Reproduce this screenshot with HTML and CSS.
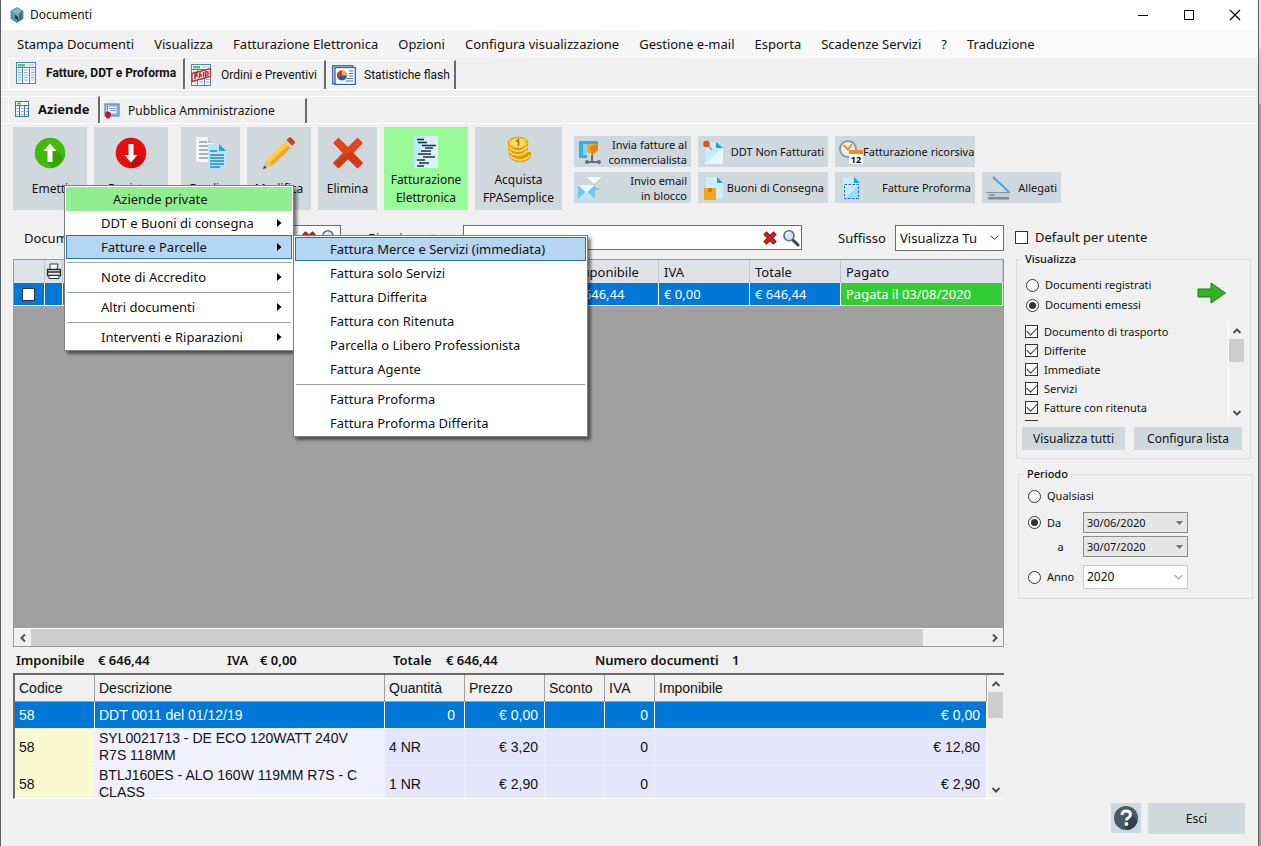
FILE: index.html
```html
<!DOCTYPE html>
<html lang="it">
<head>
<meta charset="utf-8">
<meta name="viewport" content="width=device-width, initial-scale=1">
<title>Documenti</title>
<link rel="stylesheet" href="styles.css">
</head>
<body>
<svg class="defs" aria-hidden="true">
  <defs>
    <symbol id="chev-up" viewBox="0 0 10 10"><path d="M1.500 7L5 3.500 8.500 7" fill="none" stroke="#505050" stroke-width="2"/></symbol>
    <symbol id="chev-down" viewBox="0 0 10 10"><path d="M1.500 3L5 6.500 8.500 3" fill="none" stroke="#505050" stroke-width="2"/></symbol>
    <symbol id="chev-left" viewBox="0 0 10 10"><path d="M7 1.500L3.500 5 7 8.500" fill="none" stroke="#505050" stroke-width="2"/></symbol>
    <symbol id="chev-right" viewBox="0 0 10 10"><path d="M3 1.500L6.500 5 3 8.500" fill="none" stroke="#505050" stroke-width="2"/></symbol>
    <symbol id="sub-arrow" viewBox="0 0 5 8"><path d="M0 0L4.500 4 0 8Z" fill="#000"/></symbol>
    <symbol id="sheet" viewBox="0 0 20 22">
      <rect x=".5" y=".5" width="19" height="21" fill="#f4f9fd" stroke="#4f86b8"/>
      <rect x="2" y="2" width="7" height="2.500" fill="#58c468"/><path d="M11 3h7" stroke="#9fc0dc"/>
      <path d="M1 5.500h18M6.500 5.500v16M13.500 5.500v16" stroke="#4f86b8"/>
      <path d="M2 8h3.500M2 10.500h3.500M2 13h3.500M2 15.500h3.500M2 18h3.500M8 8h4M8 10.500h4M8 13h4M8 15.500h4M8 18h4M15 8h3.500M15 10.500h3.500M15 13h3.500M15 15.500h3.500M15 18h3.500" stroke="#8fb2d0"/>
    </symbol>
    <symbol id="clear" viewBox="0 0 14 14"><path d="M3.500 3.500l7 7M10.500 3.500l-7 7" stroke="#8d1010" stroke-width="4.600" stroke-linecap="square"/><path d="M3.500 3.500l7 7M10.500 3.500l-7 7" stroke="#d02020" stroke-width="3" stroke-linecap="square"/></symbol>
    <symbol id="search" viewBox="0 0 18 18"><path d="M10.500 10.500l5.500 5.500" stroke="#3c4048" stroke-width="3" stroke-linecap="round"/><circle cx="7" cy="6.700" r="5" fill="#cfe4f7" stroke="#5d6d7e" stroke-width="1.600"/><path d="M4 6.200q.6-2.600 3-2.700" fill="none" stroke="#fff" stroke-width="1.400"/></symbol>
  </defs>
</svg>

<div class="window">
  <header class="titlebar">
    <svg class="app-icon" viewBox="0 0 14 16"><path d="M7 0l6.500 3.700v8.200L7 16 .5 11.900V3.700z" fill="#5b93b4"/><path d="M7 1l5.300 3L7 7 1.700 4z" fill="#78b5cf"/><path d="M7 7l5.300-3v7.500L7 15z" fill="#2a6c9a"/><path d="M3 6l4-2 4 2-2 1v4.500L7 12V8z" fill="#8fb670"/><path d="M5 8l3 1.500V13L5 11.400z" fill="#163f63"/></svg>
    <h1 class="title">Documenti</h1>
    <div class="win-controls">
      <button class="win-btn" aria-label="Riduci a icona"><svg width="12" height="12" viewBox="0 0 12 12"><path d="M1 6.500h10" stroke="#000"/></svg></button>
      <button class="win-btn" aria-label="Ingrandisci"><svg width="12" height="12" viewBox="0 0 12 12"><rect x="1.500" y="1.500" width="9" height="9" fill="none" stroke="#000"/></svg></button>
      <button class="win-btn" aria-label="Chiudi"><svg width="12" height="12" viewBox="0 0 12 12"><path d="M1 1l10 10M11 1L1 11" stroke="#000" stroke-width="1.200"/></svg></button>
    </div>
  </header>

  <nav class="menubar" aria-label="Menu principale">
    <a href="#">Stampa Documenti</a><a href="#">Visualizza</a><a href="#">Fatturazione Elettronica</a><a href="#">Opzioni</a><a href="#">Configura visualizzazione</a><a href="#">Gestione e-mail</a><a href="#">Esporta</a><a href="#">Scadenze Servizi</a><a href="#">?</a><a href="#">Traduzione</a>
  </nav>

  <div class="tabs tabs-main">
    <button class="tab tab-main-1 active"><svg width="20" height="22"><use href="#sheet"/></svg>Fatture, DDT e Proforma</button>
    <button class="tab tab-main-2"><svg width="21" height="22" viewBox="0 0 21 22"><use href="#sheet" width="20" height="22"/><path d="M1 9.500L19.500 4.500v8L1 17.500z" fill="#f6dede" stroke="#b03038" stroke-width="1.300"/><path d="M4 15v-5l2-.5v2.500l-2 .6M8 14l1-5 1.500 4M12.500 8v5M14.500 7.500v4.600l2.500-1.500V8z" fill="none" stroke="#b03038" stroke-width="1.400"/></svg>Ordini e Preventivi</button>
    <button class="tab tab-main-3"><svg width="24" height="20" viewBox="0 0 24 20"><rect x=".7" y=".7" width="20" height="18" fill="#dce8f6" stroke="#31589a" stroke-width="1.200"/><rect x="3" y="2.500" width="20.300" height="17" fill="#f3f8fe" stroke="#31589a" stroke-width="1.200"/><circle cx="10" cy="10.500" r="5" fill="#2856b0"/><path d="M10 10.500V5.500a5 5 0 0 0-4.600 7z" fill="#d8302a"/><path d="M10 10.500V5.500a5 5 0 0 1 5 5z" fill="#f6b92c"/><path d="M17 6h4M17 8.500h4M17 11h4M15 13.500h6M14 16h7" stroke="#4c78b8"/></svg>Statistiche flash</button>
  </div>
  <div class="tabs tabs-sub">
    <button class="tab tab-sub-1 active"><svg width="14" height="16" viewBox="0 0 14 16"><rect x=".5" y=".5" width="13" height="15" fill="#f4f9fd" stroke="#3f76aa"/><path d="M2 2.500h4" stroke="#58c468" stroke-width="2"/><path d="M1 4.500h12M4.500 4.500v11M9.500 4.500v11" stroke="#3f76aa"/><path d="M1.500 7.500h2M1.500 10.500h2M1.500 13.500h2M6 7.500h2.500M6 10.500h2.500M6 13.500h2.500M11 7.500h2M11 10.500h2M11 13.500h2" stroke="#7fa6c8"/></svg>Aziende</button>
    <button class="tab tab-sub-2"><svg width="16" height="16" viewBox="0 0 16 16"><rect x="1" y="1" width="14" height="12" fill="#a9cdf0" stroke="#3f74b4"/><rect x="3.500" y="3" width="9.500" height="8" fill="#eef6fd" stroke="#6e9dcc"/><path d="M5 5.500h6.500M6 7.500h5.500" stroke="#6e9dcc"/><circle cx="4" cy="11.500" r="3" fill="#c01820"/><path d="M2.500 13.500V16L4 15l1.500 1v-2.500z" fill="#8f1016"/></svg>Pubblica Amministrazione</button>
  </div>

  <div class="content">
    <div class="toolbar">
      <div class="big-group">
        <button class="big w74"><svg viewBox="0 0 32 32"><circle cx="16" cy="16" r="15.300" fill="#45b80a"/><path d="M16 7l13 13A15 15 0 0 1 19 31l-6-6z" fill="#2f8f06" opacity=".55"/><path d="M16 6.500l6.500 7.500h-4v11h-5V14h-4z" fill="#fff"/></svg><span>Emetti</span></button>
        <button class="big w74"><svg viewBox="0 0 32 32"><circle cx="16" cy="16" r="15.300" fill="#e60d0d"/><path d="M22 17l7.500 6A15 15 0 0 1 16 31.300V25z" fill="#a80707" opacity=".55"/><path d="M16 25.500L9.500 18h4V7h5v11h4z" fill="#fff"/></svg><span>Registra</span></button>
      </div>
      <div class="big-group big-group-last">
        <button class="big w59"><svg viewBox="0 0 32 32"><path d="M1 0h12l6 6v19H1z" fill="#f5f5f5"/><path d="M13 0l6 6h-6z" fill="#c3c8cc"/><path d="M4 5h8M4 9h12M4 13h12M4 17h12M4 21h12" stroke="#909ca4" stroke-width="1.400"/><path d="M13 7h11l7 7v18H13z" fill="#b9e6fd"/><path d="M24 7l7 7h-7z" fill="#2aa0e2"/><path d="M15 14h7M15 18h14M15 21h14M15 24h14M15 27h14M15 30h10" stroke="#1f86cc" stroke-width="1.400"/></svg><span>Duplica</span></button>
        <button class="big w64"><svg viewBox="0 0 32 32"><path d="M0 32l3.500-9L22 4.500l6 6L9.500 28.500z" fill="#fdd23c"/><path d="M6.500 26L25.500 7.500l2.500 3L9.500 28.500z" fill="#f5a623"/><path d="M3.500 23l6 5.500L0 32z" fill="#efc08c"/><path d="M1.200 28.500l2.500 2.400L0 32z" fill="#37474f"/><path d="M21.500 5l3-3 6 6-3 3z" fill="#c9d2d8"/><path d="M23.500 3l2-2q1.500-1.300 3 0l3 3q1 1.500 0 2.500l-2.200 2.200z" fill="#c8401c"/></svg><span>Modifica</span></button>
        <button class="big w59"><svg viewBox="0 0 32 32"><path d="M1 6l5.500-5.500L16 10 25.500.5 31 6l-9.500 10L31 26l-5.500 5.500L16 22l-9.500 9.500L1 26l9.500-10z" fill="#e2451c"/><path d="M16 16l5.500 0L31 26l-5.500 5.500L16 22l-9.500 9.500L1 26z" fill="#c23512" opacity=".6"/></svg><span>Elimina</span></button>
        <button class="big tall green w84"><svg viewBox="0 0 32 32"><path d="M4 0h24v32H4z" fill="#bfe7fb"/><path d="M16 0h12v32H4z" fill="#d9f2fd"/><path d="M7 3.500h7M8 6.500h9M12 9.500h14M15 12h8M11 15h10M8 18h13M13 21h12M7 24h8M9 27h10M7 30h7" stroke="#17303f" stroke-width="1.300"/></svg><span>Fatturazione<br>Elettronica</span></button>
        <button class="big tall w87"><svg viewBox="0 0 32 32"><g fill="#e29a0c"><path d="M6 16h22v4.500Q25 26 17 26T6 20z"/><path d="M5 6h20v10Q22 21 15 21T5 16z"/></g><g fill="none" stroke="#ffe068" stroke-width="1.700"><path d="M5.500 10.500Q9 15 15 15t9.500-4.500M5.500 14.500Q9 19 15 19t9.500-4.500M7 19.500q4 4.500 10 4.500t10-4.500"/></g><ellipse cx="15" cy="7" rx="10" ry="5.800" fill="#fbc62c" stroke="#e29a0c"/><ellipse cx="15" cy="7" rx="7" ry="3.800" fill="#ffdf70"/><path d="M13 5.500l2.500-1.500v6" fill="none" stroke="#b87506" stroke-width="1.700"/></svg><span>Acquista<br>FPASemplice</span></button>
      </div>
      <div class="small-grid">
        <button class="small w117"><svg viewBox="0 0 24 24"><path d="M1 1h19v3H5v11h4v3H1z" fill="#2bb0f0"/><path d="M5 4h4v11H5z" fill="#8ed6f8"/><path d="M9 4h11v6l-5 5-6-3z" fill="#f9a01c"/><path d="M14 15L20 10V4l-8 3z" fill="#ef7d0c"/><path d="M14 15v7M9 22h12" stroke="#5d6f7a" stroke-width="2"/><circle cx="9" cy="22" r="2" fill="#5d6f7a"/><circle cx="21" cy="22" r="2" fill="#5d6f7a"/></svg><span>Invia fatture al<br>commercialista</span></button>
        <button class="small w130"><svg viewBox="0 0 24 24"><path d="M3 2h11l7 6v16H3z" fill="#c9ecfd"/><path d="M3 24L21 8v16z" fill="#eaf8fe"/><path d="M14 2l7 6h-7z" fill="#1e9fe0"/><path d="M6 5l4 5" stroke="#8d9aa2" stroke-width="1.300"/><circle cx="4.500" cy="4" r="3.300" fill="#e0501c"/></svg><span>DDT Non Fatturati</span></button>
        <button class="small tight w140"><svg viewBox="0 0 24 24"><circle cx="9" cy="9" r="8" fill="#eceff1" stroke="#8a9aa3" stroke-width="2"/><path d="M4.500 5L9 9.500 13 4" fill="none" stroke="#f38a1c" stroke-width="1.800"/><path d="M10 11h14v13H10z" fill="#fff"/><path d="M10 10h14v4H10z" fill="#f38a1c"/><text x="17" y="23" class="cal-num">12</text></svg><span>Fatturazione ricorsiva</span></button>
        <i class="blank"></i>
        <button class="small w117"><svg viewBox="0 0 24 24"><path d="M8 1h16l-8 8z" fill="#fafafa"/><path d="M8 1l8 7 8-7-2 3-6 6-6-6z" fill="#c8ced2"/><path d="M15 10l9 4H14z" fill="#b1b9be"/><path d="M0 9h17v14H0z" fill="#6cc6f4"/><path d="M0 23l8.500-8 8.500 8z" fill="#bfe8fc"/><path d="M0 9l8.500 8L17 9z" fill="#e6f7fe"/></svg><span>Invio email<br>in blocco</span></button>
        <button class="small w130"><svg viewBox="0 0 24 24"><path d="M4 1h11l6 6v16H4z" fill="#cdeefd"/><path d="M15 1l6 6h-6z" fill="#1e9fe0"/><path d="M2 12h12v12H2z" fill="#fba21e"/><path d="M6 12h4v4H6z" fill="#e27409"/></svg><span>Buoni di Consegna</span></button>
        <button class="small w140"><svg viewBox="0 0 24 24"><path d="M4 1h11l6 6v17H4z" fill="#c9ecfd"/><path d="M4 24L21 8v16z" fill="#9fdcf9"/><path d="M15 1l6 6h-6z" fill="#1e9fe0"/><rect x="5.500" y="8.500" width="14" height="14" fill="none" stroke="#1c6fa4" stroke-dasharray="2.500 1.500"/></svg><span>Fatture Proforma</span></button>
        <button class="small w79"><svg viewBox="0 0 24 24"><path d="M7 1l16 15" stroke="#42a5e0" stroke-width="2"/><path d="M0 16h24l-1 5H2z" fill="#c4ced4"/><path d="M2 21h21v2.500H2z" fill="#78909c"/><path d="M0 16.500h24" stroke="#84959e"/><path d="M3 19h6" stroke="#5c7480"/></svg><span>Allegati</span></button>
      </div>
    </div>

    <div class="body-cols">
      <main class="left-col">
        <div class="filters">
          <label class="f-doc" for="doc">Documento</label>
          <div class="search-box box-doc"><input id="doc" type="text"><button aria-label="Cancella documento"><svg width="14" height="14"><use href="#clear"/></svg></button><button aria-label="Cerca documento"><svg width="18" height="18"><use href="#search"/></svg></button></div>
          <label class="f-ric" for="ric">Ricevimento</label>
          <div class="search-box box-ric"><input id="ric" type="text"><button aria-label="Cancella"><svg width="14" height="14"><use href="#clear"/></svg></button><button aria-label="Cerca"><svg width="18" height="18"><use href="#search"/></svg></button></div>
          <label class="f-suf" for="suf">Suffisso</label>
          <div class="select-wrap suf-wrap"><select id="suf"><option>Visualizza Tu</option></select><svg width="9" height="6" viewBox="0 0 9 6"><path d="M.5 .5l4 4 4-4" fill="none" stroke="#404040"/></svg></div>
        </div>

        <div class="doc-grid">
          <table class="doc-table">
            <colgroup><col class="c31"><col class="c18"><col><col class="c91"><col class="c91"><col class="c91"><col class="c162"></colgroup>
            <thead><tr><th></th><th class="print-cell"><svg width="16" height="17" viewBox="0 0 16 17"><path d="M4 6V1h8l-1 5" fill="#fff" stroke="#2a3c50"/><path d="M1.500 6.500h13v6h-13z" fill="#e8edf2" stroke="#222c36" stroke-width="1.300"/><path d="M2 9h12" stroke="#222c36" stroke-width="1.500"/><path d="M3 12.500h10v3H3z" fill="#fff" stroke="#222c36"/></svg></th><th></th><th>Imponibile</th><th>IVA</th><th>Totale</th><th>Pagato</th></tr></thead>
            <tbody><tr><td class="tick-cell"><input class="check" type="checkbox" aria-label="Seleziona riga"></td><td></td><td></td><td>€ 646,44</td><td>€ 0,00</td><td>€ 646,44</td><td class="paid">Pagata il 03/08/2020</td></tr></tbody>
          </table>
          <div class="hscroll"><button aria-label="Scorri a sinistra"><svg width="10" height="10"><use href="#chev-left"/></svg></button><div class="hthumb"></div><button class="end" aria-label="Scorri a destra"><svg width="10" height="10"><use href="#chev-right"/></svg></button></div>
        </div>

        <dl class="totals">
          <div class="t1"><dt>Imponibile</dt><dd>€ 646,44</dd></div>
          <div class="t2"><dt>IVA</dt><dd>€ 0,00</dd></div>
          <div class="t3"><dt>Totale</dt><dd>€ 646,44</dd></div>
          <div class="t4"><dt>Numero documenti</dt><dd>1</dd></div>
        </dl>

        <div class="lines">
          <div class="lines-clip">
            <table class="line-table">
              <colgroup><col class="c80"><col class="c290"><col class="c80"><col class="c80"><col class="c60"><col class="c50"><col></colgroup>
              <thead><tr><th>Codice</th><th>Descrizione</th><th>Quantità</th><th>Prezzo</th><th>Sconto</th><th>IVA</th><th>Imponibile</th></tr></thead>
              <tbody>
                <tr class="sel"><td>58</td><td>DDT 0011 del 01/12/19</td><td class="qty-zero">0</td><td class="num">€ 0,00</td><td></td><td class="num">0</td><td class="num">€ 0,00</td></tr>
                <tr><td>58</td><td>SYL0021713 - DE ECO 120WATT 240V R7S 118MM</td><td>4 NR</td><td class="num">€ 3,20</td><td></td><td class="num">0</td><td class="num">€ 12,80</td></tr>
                <tr><td>58</td><td>BTLJ160ES - ALO 160W 119MM R7S - C CLASS</td><td>1 NR</td><td class="num">€ 2,90</td><td></td><td class="num">0</td><td class="num">€ 2,90</td></tr>
              </tbody>
            </table>
          </div>
          <div class="vscroll"><button aria-label="Scorri su"><svg width="10" height="10"><use href="#chev-up"/></svg></button><div class="vthumb"></div><button class="end" aria-label="Scorri giù"><svg width="10" height="10"><use href="#chev-down"/></svg></button></div>
        </div>
      </main>

      <aside class="right-col">
        <label class="default-user"><input class="check" type="checkbox">Default per utente</label>

        <fieldset class="group g-view">
          <legend>Visualizza</legend>
          <div class="view-top">
            <div class="radios">
              <label><input class="radio" type="radio" name="view">Documenti registrati</label>
              <label><input class="radio" type="radio" name="view" checked>Documenti emessi</label>
            </div>
            <button class="go" aria-label="Applica"><svg width="30" height="22" viewBox="0 0 30 22"><path d="M1 7h13V1l14.500 10L14 21v-6H1z" fill="#33b422" stroke="#1c7a12"/></svg></button>
          </div>
          <div class="list">
            <div class="list-items">
              <label><input class="check" type="checkbox" checked>Documento di trasporto</label>
              <label><input class="check" type="checkbox" checked>Differite</label>
              <label><input class="check" type="checkbox" checked>Immediate</label>
              <label><input class="check" type="checkbox" checked>Servizi</label>
              <label><input class="check" type="checkbox" checked>Fatture con ritenuta</label>
              <label><input class="check" type="checkbox" checked aria-label="Altro"></label>
            </div>
            <div class="vscroll"><button aria-label="Scorri su"><svg width="10" height="10"><use href="#chev-up"/></svg></button><div class="vthumb"></div><button class="end" aria-label="Scorri giù"><svg width="10" height="10"><use href="#chev-down"/></svg></button></div>
          </div>
          <div class="view-actions"><button>Visualizza tutti</button><button>Configura lista</button></div>
        </fieldset>

        <fieldset class="group g-period">
          <legend>Periodo</legend>
          <div class="period">
            <label class="wide"><input class="radio" type="radio" name="per">Qualsiasi</label>
            <label><input class="radio" type="radio" name="per" checked>Da</label>
            <div class="select-wrap date"><select aria-label="Da"><option>30/06/2020</option></select><svg width="7" height="4" viewBox="0 0 7 4"><path d="M0 0h7L3.500 4z" fill="#707070"/></svg></div>
            <label class="to" for="to">a</label>
            <div class="select-wrap date"><select id="to"><option>30/07/2020</option></select><svg width="7" height="4" viewBox="0 0 7 4"><path d="M0 0h7L3.500 4z" fill="#707070"/></svg></div>
            <label class="anno"><input class="radio" type="radio" name="per">Anno</label>
            <div class="select-wrap year"><select aria-label="Anno"><option>2020</option></select><svg width="9" height="6" viewBox="0 0 9 6"><path d="M.5 1l4 4 4-4" fill="none" stroke="#b0b0b0" stroke-width="1.300"/></svg></div>
          </div>
        </fieldset>
      </aside>
    </div>

    <footer class="footer">
      <button class="help" aria-label="Aiuto"><svg width="26" height="26" viewBox="0 0 26 26"><circle cx="13" cy="13" r="12" fill="#455a64"/><path d="M16 6l8.500 10A12 12 0 0 1 14 25l-3-4z" fill="#2f424b"/><path d="M9 10q0-4 4.200-4t4.200 3.500q0 2-2 3.300-1.900 1.200-1.900 2.700" fill="none" stroke="#fff" stroke-width="3"/><circle cx="13.400" cy="19" r="1.900" fill="#fff"/></svg></button>
      <button class="exit">Esci</button>
    </footer>
  </div>

  <ul class="popup popup-main">
    <li><button class="head">Aziende private</button></li>
    <li><button>DDT e Buoni di consegna<svg width="5" height="8"><use href="#sub-arrow"/></svg></button></li>
    <li><button class="hot">Fatture e Parcelle<svg width="5" height="8"><use href="#sub-arrow"/></svg></button></li>
    <li class="sep"></li>
    <li><button>Note di Accredito<svg width="5" height="8"><use href="#sub-arrow"/></svg></button></li>
    <li class="sep"></li>
    <li><button>Altri documenti<svg width="5" height="8"><use href="#sub-arrow"/></svg></button></li>
    <li class="sep"></li>
    <li><button>Interventi e Riparazioni<svg width="5" height="8"><use href="#sub-arrow"/></svg></button></li>
  </ul>
  <ul class="popup popup-sub">
    <li><button class="hot">Fattura Merce e Servizi (immediata)</button></li>
    <li><button>Fattura solo Servizi</button></li>
    <li><button>Fattura Differita</button></li>
    <li><button>Fattura con Ritenuta</button></li>
    <li><button>Parcella o Libero Professionista</button></li>
    <li><button>Fattura Agente</button></li>
    <li class="sep"></li>
    <li><button>Fattura Proforma</button></li>
    <li><button>Fattura Proforma Differita</button></li>
  </ul>
</div>
</body>
</html>
```
FILE: styles.css
```css
* { box-sizing: border-box; }

body {
  margin: 0;
  padding-right: 2px;
  background: linear-gradient(#e4e4e4 0 49px, #c8cccc 49px 104px, #9c9c9c 104px);
  color: #111;
  font: 13px/18px "Noto Sans", "Open Sans", sans-serif;
}

button, input, select { font: inherit; color: inherit; margin: 0; }
button { border: 0; padding: 0; background: none; white-space: nowrap; }
label, a { white-space: nowrap; }
svg { display: block; flex: none; }
.defs { position: absolute; width: 0; height: 0; }

.window {
  position: relative;
  display: flex;
  flex-direction: column;
  min-height: 100vh;
  border-left: 1px solid #5c5c5c;
  border-right: 1px solid #5c5c5c;
  background: #f0f0f0;
}

/* Title bar */
.titlebar { display: flex; align-items: center; height: 30px; padding-left: 9px; background: #fff; }
.app-icon { width: 14px; height: 16px; }
.title { margin: 0 0 0 6px; font-size: 12px; font-weight: 400; }
.win-controls { display: flex; margin-left: auto; }
.win-btn { display: flex; align-items: center; justify-content: center; width: 46px; height: 28px; }

.menubar {
  display: flex;
  gap: 20px;
  height: 28px;
  padding-left: 16px;
  background: linear-gradient(90deg, #f0f0f0, #fafafa 80%);
  line-height: 28px;
}
.menubar a { color: #111; text-decoration: none; }

/* Tab strips */
.tabs { display: flex; align-items: flex-end; margin: 0 2px 0 0; padding-left: 7px; border-bottom: 1px solid #fff; }
.tabs-main { height: 32px; font: 12px/18px Roboto, sans-serif; }
.tabs-sub { height: 28px; margin-top: 6px; border-top: 1px solid #fff; }
.tab {
  display: flex;
  align-items: center;
  height: 29px;
  border-top: 1px solid #fff;
  border-left: 1px solid #fff;
  border-right: 2px solid #6a6a6a;
}
.tab.active { height: 31px; padding-bottom: 3px; font-weight: 700; }
.tabs-sub .tab { height: 25px; }
.tabs-sub .tab.active { height: 27px; }
.tab-main-1 { width: 177px; padding-left: 7px; gap: 10px; }
.tab-main-2 { width: 141px; padding-left: 5px; gap: 9px; }
.tab-main-3 { width: 130px; padding-left: 5px; gap: 8px; }
.tab-sub-1 { width: 92px; padding-left: 6px; gap: 9px; }
.tab-sub-2 { width: 207px; padding-left: 3px; gap: 8px; font-size: 12px; }

/* Toolbar */
.content { display: flex; flex: 1; flex-direction: column; padding: 3px 5px 12px 12px; }
.toolbar { display: flex; }
.big-group { display: flex; gap: 7px; margin-right: 13px; }
.big-group-last { margin-right: 12px; }
.big {
  display: flex;
  flex-direction: column;
  align-items: center;
  justify-content: space-between;
  height: 83px;
  padding: 10px 0 12px;
  background: #cfd8dd;
  font-size: 12px;
}
.big svg { width: 32px; height: 32px; }
.big.tall { padding: 9px 0 3px; }
.big.green { background: #98fb98; }
.w59 { width: 59px; }
.w64 { width: 64px; }
.w74 { width: 74px; }
.w79 { width: 79px; }
.w84 { width: 84px; }
.w87 { width: 87px; }
.w117 { width: 117px; }
.w130 { width: 130px; }
.w140 { width: 140px; }
.small-grid { display: grid; grid-template-columns: repeat(4, auto); align-content: center; gap: 5px 7px; padding-top: 2px; }
.small {
  display: flex;
  align-items: center;
  justify-content: space-between;
  height: 31px;
  padding: 0 4px;
  background: #cfd8dd;
  font-size: 11px;
  line-height: 15px;
  text-align: right;
}
.small.tight { padding-right: 1px; }
.small svg { width: 24px; height: 24px; }
.cal-num { font: 700 9px "Noto Sans", sans-serif; text-anchor: middle; }

/* Columns */
.body-cols { display: flex; flex: 1; gap: 11px; padding-top: 14px; }
.left-col { display: flex; flex: 1; flex-direction: column; min-width: 0; }
.right-col { width: 238px; flex: none; }

.filters { display: flex; align-items: center; height: 27px; }
.f-doc { width: 85px; padding-left: 11px; }
.box-doc { width: 243px; }
.f-ric { width: 122px; padding-left: 27px; }
.box-ric { flex: 1; }
.f-suf { width: 93px; padding-left: 36px; }
.search-box { display: flex; align-items: center; height: 25px; padding-right: 1px; border: 1px solid #6e6e6e; background: #fff; }
.search-box input { flex: 1; min-width: 0; border: 0; outline: 0; background: none; }
.search-box button { margin-left: 5px; }

.select-wrap { position: relative; background: #fff; border: 1px solid #6e6e6e; }
.select-wrap select { display: block; width: 100%; height: 100%; padding: 0 4px; border: 0; background: none; appearance: none; }
.select-wrap svg { position: absolute; top: 50%; right: 4px; translate: 0 -50%; pointer-events: none; }
.suf-wrap { width: 109px; height: 26px; }

/* Document grid */
.doc-grid { display: flex; flex: 1; flex-direction: column; margin-top: 8px; border: 1px solid #999; background: #a0a0a0; }
table { width: 100%; border-collapse: separate; border-spacing: 0; table-layout: fixed; }
th { font-weight: 400; text-align: left; }
th, td { padding: 0 5px; overflow: hidden; }
.c18 { width: 18px; }
.c31 { width: 31px; }
.c50 { width: 50px; }
.c60 { width: 60px; }
.c80 { width: 80px; }
.c91 { width: 91px; }
.c162 { width: 162px; }
.c290 { width: 290px; }
.doc-table th { height: 23px; border-right: 1px solid #bfc3c7; background: #dfe2e8; white-space: nowrap; }
.doc-table td { height: 23px; border-right: 1px solid #fff; border-bottom: 1px solid #fff; background: #0078d7; color: #fff; white-space: nowrap; }
.doc-table .paid { background: #32cd32; }
.doc-table .print-cell { padding: 0 1px; }
.tick-cell { padding-left: 8px; }

.check, .radio { display: block; flex: none; width: 13px; height: 13px; appearance: none; border: 1px solid #333; background: #fff; }
.check:checked::after {
  content: "";
  display: block;
  width: 9px;
  height: 5px;
  margin: 1px;
  border: solid #333;
  border-width: 0 0 1px 1px;
  rotate: -45deg;
}
.radio { border-radius: 50%; }
.radio:checked::after { content: ""; display: block; width: 7px; height: 7px; margin: 2px; border-radius: 50%; background: #333; }

.hscroll { display: flex; height: 18px; margin-top: auto; border-top: 1px solid #fff; background: #f0f0f0; }
.hscroll button, .vscroll button { display: flex; align-items: center; justify-content: center; width: 17px; height: 17px; flex: none; }
.hthumb { width: 93%; max-width: 892px; background: #cdcdcd; }
.hscroll .end { margin-left: auto; }
.vscroll { display: flex; flex-direction: column; width: 17px; flex: none; border-left: 1px solid #fff; }
.vscroll button { width: 15px; }
.vscroll .end { margin-top: auto; }
.vthumb { width: 15px; height: 26px; background: #cdcdcd; }

.totals { display: flex; align-items: center; height: 26px; margin: 0; padding-left: 3px; font-weight: 600; }
.totals div { display: flex; }
.totals dd { margin: 0; white-space: nowrap; }
.totals dt { white-space: nowrap; }
.t1 { width: 211px; }
.t1 dt { width: 82px; }
.t2 { width: 166px; }
.t2 dt { width: 33px; }
.t3 { width: 202px; }
.t3 dt { width: 53px; }
.t4 dt { width: 137px; }

/* Line items */
.lines { display: flex; height: 126px; border: solid #6a6a6a; border-width: 2px 0 0 2px; border-bottom: 1px solid #fff; font: 14px/17px "Liberation Sans", sans-serif; }
.lines-clip { flex: 1; overflow: hidden; }
.line-table th { height: 27px; padding: 0 4px; border-right: 1px solid #a0a0a0; border-bottom: 1px solid #a0a0a0; }
.line-table td { height: 37px; padding: 0 4px; border-right: 1px solid #eeeefc; border-bottom: 1px solid #eeeefc; background: #e6e6fa; }
.line-table td:nth-child(1) { background: #fafad2; }
.line-table td:nth-child(2) { padding-right: 20px; background: #f0f0ff; }
.line-table .sel td, .line-table .sel td:nth-child(n) { height: 27px; border-right-color: #fff; background: #0078d7; color: #fff; }
.line-table .num { padding-right: 6px; text-align: right; }
.line-table .qty-zero { padding-right: 9px; text-align: right; }

/* Side panel */
.default-user { display: flex; align-items: center; gap: 7px; height: 26px; }
.group { min-width: 0; margin: 0; padding: 0; border: 1px solid #dcdcdc; font-size: 11px; }
.group legend { margin-left: 5px; padding: 0 3px; font-weight: 500; line-height: 16px; }
.group label { display: flex; align-items: center; }
.g-view { width: 235px; margin: 1px 0 0 1px; padding: 8px 0; }
.view-top { display: flex; justify-content: space-between; padding: 0 23px 0 9px; }
.radios label { height: 20px; gap: 6px; }
.go { margin-top: 7px; align-self: start; }
.list { display: flex; height: 99px; margin: 7px 5px 0; overflow: hidden; }
.list-items { flex: 1; height: 99px; overflow: hidden; }
.list-items label { height: 19px; padding-left: 3px; gap: 6px; }
.list .vthumb { height: 23px; }
.view-actions { display: flex; gap: 9px; margin: 6px 8px 0 5px; font-size: 12px; }
.view-actions button { flex: 103; height: 23px; background: #cfd8dd; }
.view-actions button + button { flex: 108; }
.g-period { width: 235px; margin: 7px 0 0 3px; padding: 4px 0 9px; }
.period { display: grid; grid-template-columns: 48px 105px; align-items: center; gap: 3px 7px; padding-left: 9px; }
.period label { gap: 6px; }
.period .wide { grid-column: 1 / -1; height: 20px; margin-bottom: 3px; }
.period .to { justify-content: center; padding-left: 17px; }
.date { height: 21px; border-color: #8c8c8c; background: #e6e6e6; }
.year { height: 24px; margin-top: 5px; border-color: #c8c8c8; font-size: 12px; }
.period .anno { margin-top: 5px; }
.period .select-wrap select { padding: 0 3px; }

.footer { display: flex; justify-content: flex-end; gap: 7px; padding: 4px 8px 0 0; font-size: 12px; }
.help { display: flex; align-items: center; justify-content: center; width: 30px; height: 30px; background: #cfd8dd; }
.exit { width: 97px; height: 31px; background: #cfd8dd; }

/* Popup menus float over the toolbar and the grid */
.popup { position: absolute; margin: 0; padding: 1px; list-style: none; border: 1px solid #808080; background: #fff; box-shadow: 3px 3px 3px rgba(0, 0, 0, .5); }
.popup-main { top: 185px; left: 63px; width: 230px; }
.popup-sub { top: 235px; left: 292px; width: 295px; }
.popup button { display: flex; align-items: center; justify-content: space-between; width: 100%; height: 24px; padding: 0 9px 0 34px; border: 1px solid transparent; text-align: left; }
.popup .head { padding-left: 46px; background: #90ee90; }
.popup .hot { border-color: #2672b8; background: #b5d6f2; }
.popup .sep { height: 1px; margin: 3px 1px 2px; background: #a0a0a0; }
```
